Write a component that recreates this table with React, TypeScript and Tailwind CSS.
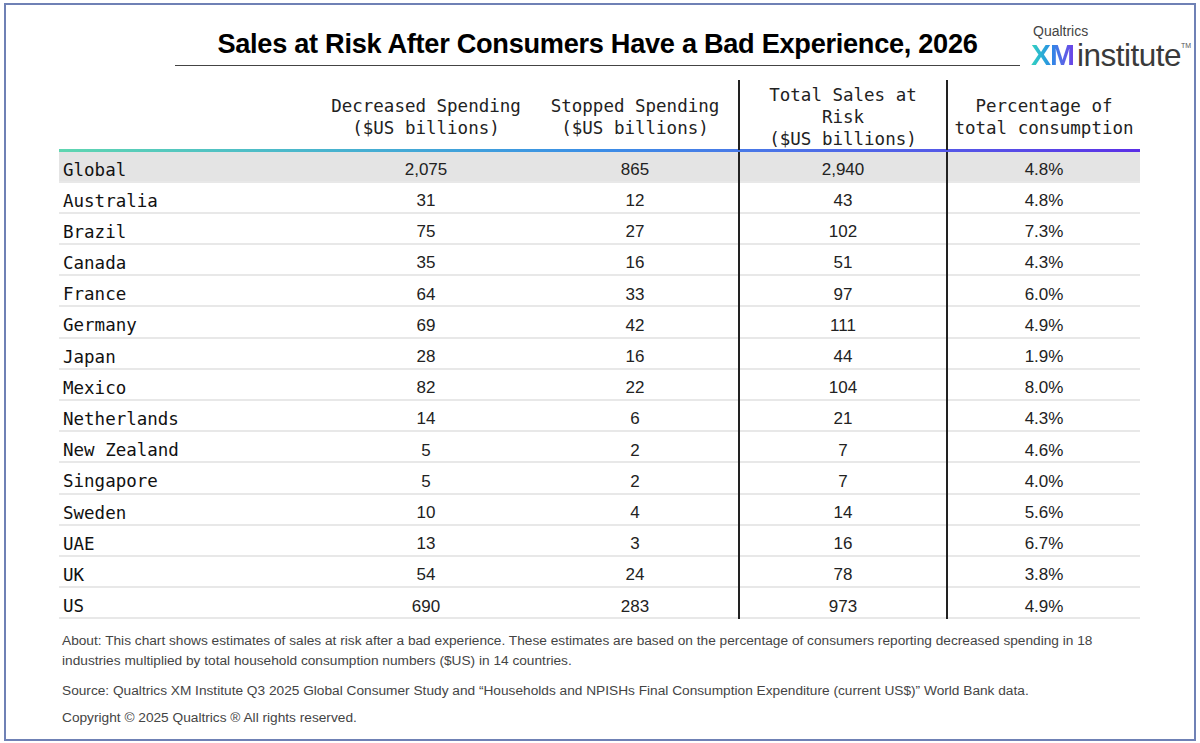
const ROWS: [string, string, string, string, string][] = [
  ['Global', '2,075', '865', '2,940', '4.8%'],
  ['Australia', '31', '12', '43', '4.8%'],
  ['Brazil', '75', '27', '102', '7.3%'],
  ['Canada', '35', '16', '51', '4.3%'],
  ['France', '64', '33', '97', '6.0%'],
  ['Germany', '69', '42', '111', '4.9%'],
  ['Japan', '28', '16', '44', '1.9%'],
  ['Mexico', '82', '22', '104', '8.0%'],
  ['Netherlands', '14', '6', '21', '4.3%'],
  ['New Zealand', '5', '2', '7', '4.6%'],
  ['Singapore', '5', '2', '7', '4.0%'],
  ['Sweden', '10', '4', '14', '5.6%'],
  ['UAE', '13', '3', '16', '6.7%'],
  ['UK', '54', '24', '78', '3.8%'],
  ['US', '690', '283', '973', '4.9%'],
]

const mono = "font-['DejaVu_Sans_Mono',monospace]"
const sans = "font-['Liberation_Sans',Arial,sans-serif]"
const grid = 'grid grid-cols-[261px_212px_206px_208px_194px]'

function Logo() {
  return (
    <div className={`flex flex-col ${sans} leading-none`}>
      <span className="ml-[2px] text-[14px] text-[#444]">Qualtrics</span>
      <div className="mt-[2px] flex items-start">
        <span className="bg-gradient-to-r from-[#35d3bd] via-[#2e86e6] to-[#6a3ee6] bg-clip-text text-[30px] font-bold tracking-[-1px] text-transparent">
          XM
        </span>
        <span className="ml-[3px] text-[31.5px] font-light text-[#3a3a3a] tracking-[-0.5px]">institute</span>
        <span className="mt-[2px] text-[7px] text-[#555]">TM</span>
      </div>
    </div>
  )
}

export default function App() {
  return (
    <div className="h-[743px] w-[1200px] bg-white pl-[4px] pt-[3px]">
      <div className="h-[738px] w-[1192px] border-2 border-[#6f81b5] bg-white">
        {/* Title */}
        <div className="flex items-start">
          <div className="ml-[169px] mt-[23px] w-[845px] border-b border-[#444] pb-[5px] text-center">
            <h1 className={`${sans} text-[27.2px] font-bold leading-[32px] tracking-[-0.3px] text-black`}>
              Sales at Risk After Consumers Have a Bad Experience, 2026
            </h1>
          </div>
          <div className="ml-[11px] mt-[19px]">
            <Logo />
          </div>
        </div>

        {/* Table */}
        <div className="ml-[53px] mt-[8px] w-[1081px]">
          <div className={`${grid} h-[69px] ${mono} text-[17.5px] leading-[22px] text-[#222]`}>
            <div />
            <div className="flex items-center justify-center pt-[4px] text-center">
              Decreased Spending<br />($US billions)
            </div>
            <div className="flex items-center justify-center pt-[4px] text-center">
              Stopped Spending<br />($US billions)
            </div>
            <div className="flex items-center justify-center border-l-2 border-[#222] pt-[4px] text-center">
              Total Sales at<br />Risk<br />($US billions)
            </div>
            <div className="flex items-center justify-center border-l-2 border-[#222] pt-[4px] text-center">
              Percentage of<br />total consumption
            </div>
          </div>
          <div className="h-[3px] bg-gradient-to-r from-[#5fd6b0] via-[#3b8de6] to-[#5b2ee6]" />
          {ROWS.map((r, i) => (
            <div
              key={r[0]}
              className={`${grid} h-[31.2px] border-b-2 border-[#e8e8e8] ${i === 0 ? 'bg-[#e4e4e4]' : ''}`}
            >
              <div className={`flex items-center pl-[4px] pt-[5px] ${mono} text-[17.5px] text-[#111]`}>{r[0]}</div>
              <div className={`flex items-center justify-center pt-[5px] ${sans} text-[17px] text-[#222]`}>{r[1]}</div>
              <div className={`flex items-center justify-center pt-[5px] ${sans} text-[17px] text-[#222]`}>{r[2]}</div>
              <div className={`flex items-center justify-center border-l-2 border-[#222] pt-[5px] ${sans} text-[17px] text-[#222]`}>{r[3]}</div>
              <div className={`flex items-center justify-center border-l-2 border-[#222] pt-[5px] ${sans} text-[17px] text-[#222]`}>{r[4]}</div>
            </div>
          ))}
        </div>

        {/* Notes */}
        <div className={`ml-[56px] mt-[12px] w-[1080px] ${sans} text-[13.7px] leading-[20px] text-[#444]`}>
          <p>
            About: This chart shows estimates of sales at risk after a bad experience. These estimates are based on the percentage of consumers reporting decreased spending in 18 industries multiplied by total household consumption numbers ($US) in 14 countries.
          </p>
          <p className="mt-[10px]">
            Source: Qualtrics XM Institute Q3 2025 Global Consumer Study and “Households and NPISHs Final Consumption Expenditure (current US$)” World Bank data.
          </p>
          <p className="mt-[7px]">Copyright © 2025 Qualtrics ® All rights reserved.</p>
        </div>
      </div>
    </div>
  )
}
